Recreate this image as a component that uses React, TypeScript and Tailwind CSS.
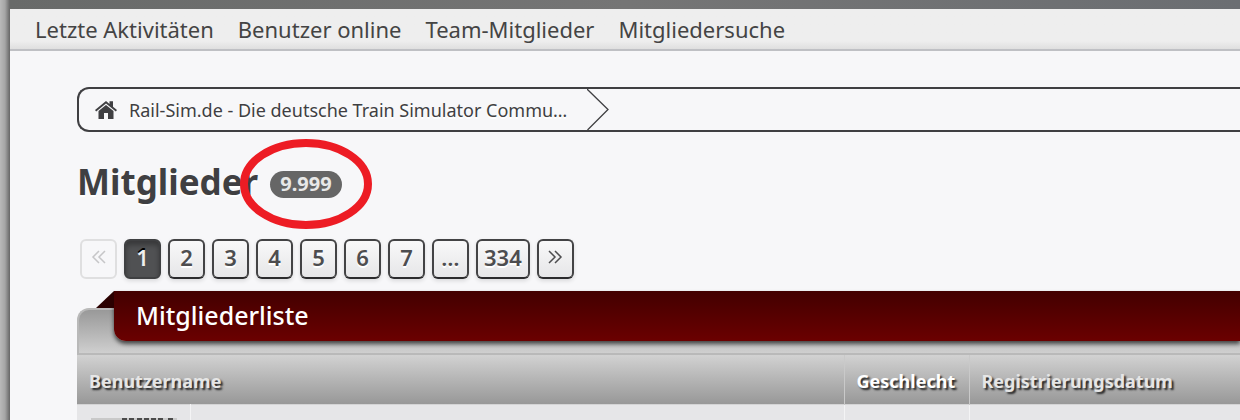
import { ReactNode } from 'react';

const NAV_LINKS = [
  'Letzte Aktivitäten',
  'Benutzer online',
  'Team-Mitglieder',
  'Mitgliedersuche',
];

const PAGES = ['1', '2', '3', '4', '5', '6', '7', '…', '334'];

interface IPageButtonProps {
  label: string;
  active?: boolean;
  disabled?: boolean;
  children: ReactNode;
}

function PageButton({ label, active, disabled, children }: IPageButtonProps) {
  let look =
    'border-[#434345] border-b-[#2b2b2d] bg-linear-to-b from-[#f8f8f9] to-[#e6e6e8] text-[#4d4d4f] shadow-[0_2px_4px_rgba(0,0,0,0.12)] [text-shadow:0_2px_0_#fff]';
  if (active) {
    look =
      'border-[#3f4042] bg-[#505153] text-[#efefef] shadow-[inset_0_4px_5px_rgba(0,0,0,0.3),0_2px_4px_rgba(0,0,0,0.12)] [text-shadow:0_-2px_0_#000]';
  }
  if (disabled) {
    look = 'border-[#dfdfe0] text-[#c6c6c8]';
  }

  return (
    <button
      type="button"
      aria-label={label}
      disabled={disabled}
      className={`flex h-10 min-w-[37px] items-center justify-center rounded-md border-2 px-1.5 pb-1 text-[22px] leading-6 font-semibold ${look}`}
    >
      {children}
    </button>
  );
}

function DoubleChevron({ d }: { d: string }) {
  return (
    <svg
      className="h-4 w-4"
      viewBox="0 0 16 16"
      fill="none"
      stroke="currentColor"
      strokeWidth="1.5"
    >
      <path d={d} />
    </svg>
  );
}

function Breadcrumb() {
  return (
    <nav
      aria-label="Breadcrumb"
      className="flex h-[45px] rounded-l-xl border-2 border-r-0 border-[#3f3f42]"
    >
      <a
        href="#"
        className="flex w-[508px] items-center pl-4 text-[#3f3f42] [text-shadow:0_2px_0_#fff]"
      >
        <svg className="h-5 w-[22px]" viewBox="0 0 22 20" fill="currentColor">
          <path d="M11 5 18.5 11V19H13V13H9V19H3.500V11Z" />
          <path d="M11 1 14.500 3.900V1.200H18V6.800L22 10 20.800 11.400 11 3.500 1.200 11.400 0 10Z" />
        </svg>
        <span className="ml-3 text-[18px] leading-6 whitespace-nowrap">
          Rail-Sim.de - Die deutsche Train Simulator Commu…
        </span>
      </a>
      <svg
        className="h-full w-[22px]"
        viewBox="0 0 22 41"
        fill="none"
        stroke="#3f3f42"
        strokeWidth="1.3"
      >
        <path d="M0 0 21 20.500 0.500 41" />
      </svg>
    </nav>
  );
}

function Title() {
  return (
    <div className="mt-[26px] flex h-12 items-center">
      <h1 className="text-[35px] leading-12 font-bold text-[#3f3f42] [text-shadow:0_2px_0_#fff]">
        Mitglieder
      </h1>
      <span className="relative mt-1 ml-3 flex h-[27px] items-center rounded-full bg-[#666] px-2.5 text-[20px] leading-6 font-bold text-[#e8e8e8]">
        9.999
        <svg
          className="absolute top-1/2 left-1/2 h-[90px] w-[132px] max-w-none -translate-x-1/2 -translate-y-1/2"
          viewBox="0 0 132 90"
          fill="none"
        >
          <ellipse
            cx="66"
            cy="45"
            rx="62"
            ry="41"
            stroke="#ed1c24"
            strokeWidth="8"
          />
        </svg>
      </span>
    </div>
  );
}

function MemberList() {
  const headCell =
    'border-l border-[#c9c9c9] px-3 pt-1 text-left text-[18px] font-bold whitespace-nowrap [text-shadow:2px_2px_2px_#222]';

  return (
    <section className="mt-3">
      <div className="relative">
        <div className="pt-[17px]">
          <div className="h-[47px] rounded-tl-xl border-2 border-r-0 border-[#b9b9b9] bg-linear-to-b from-[#999] to-[#cfcfcf]" />
        </div>
        {/* ribbon with its folded corner, lying over the grey bar */}
        <div className="absolute top-0 right-0 left-[37px] flex h-[50px] items-center rounded-bl-xl bg-linear-to-b from-[#430000] to-[#6b0000] px-[22px] pb-0.5 shadow-[0_3px_4px_rgba(0,0,0,0.65)]">
          <h2 className="text-[25px] leading-8 font-medium text-white">
            Mitgliederliste
          </h2>
        </div>
        <svg
          className="absolute top-0 left-[19px] h-[17px] w-[18px]"
          viewBox="0 0 18 17"
        >
          <path d="M18 0V17H0Z" fill="#2b0000" />
        </svg>
      </div>
      <table className="w-full table-fixed border-collapse">
        <colgroup>
          <col className="w-[113px]" />
          <col />
          <col className="w-[125px]" />
          <col className="w-[271px]" />
        </colgroup>
        <thead>
          <tr className="h-[49px] bg-linear-to-b from-[#d2d2d2] to-[#989898] text-[#e6e6e6]">
            <th
              colSpan={2}
              className="px-3 pt-1 text-left text-[18px] font-bold [text-shadow:2px_2px_2px_#222]"
            >
              Benutzername
            </th>
            <th className={`${headCell} text-white`}>Geschlecht</th>
            <th className={headCell}>Registrierungsdatum</th>
          </tr>
        </thead>
        <tbody>
          <tr className="h-16 border-t border-[#d4d4d5] bg-[#e6e6e8] align-top">
            <td className="px-3.5 pt-[13px]">
              <svg className="h-12 w-[86px]" viewBox="0 0 86 48">
                <path d="M0 0H86V48H0Z" fill="#c9c9c9" />
                <path
                  d="M31 1H43M46 1H72M77 1H83"
                  stroke="#4b4b4b"
                  strokeWidth="2"
                  strokeDasharray="5 2"
                />
              </svg>
            </td>
            <td className="border-l border-[#f4f4f5]" />
            <td className="border-l border-[#f4f4f5]" />
            <td className="border-l border-[#f4f4f5]" />
          </tr>
        </tbody>
      </table>
    </section>
  );
}

function App() {
  return (
    <div className="flex h-screen overflow-hidden bg-[#f7f7f9] font-['Trebuchet_MS','Noto_Sans',sans-serif]">
      <div className="w-2.5 shrink-0 bg-linear-to-r from-[#b9b9b9] via-[#a5a5a5] to-[#666]" />
      <div className="min-w-0 flex-1">
        <div className="h-[9px] bg-linear-to-r from-[#686a69] via-[#757575] to-[#6b6e72]" />
        <nav className="flex h-[42px] items-center gap-6 border-b-2 border-[#bfc0c4] bg-linear-to-b from-[#eee] from-80% to-[#dfdfdf] px-[25px] text-[22px] leading-7 text-[#444]">
          {NAV_LINKS.map((link) => (
            <a key={link} href="#" className="whitespace-nowrap">
              {link}
            </a>
          ))}
        </nav>
        <main className="pt-9 pl-[67px]">
          <Breadcrumb />
          <Title />
          <nav aria-label="Seiten" className="mt-[33px] ml-[3px] flex gap-[7px]">
            <PageButton label="Vorherige Seite" disabled>
              <DoubleChevron d="M8 2 2 8 8 14M14 2 8 8 14 14" />
            </PageButton>
            {PAGES.map((page) => (
              <PageButton key={page} label={page} active={page === '1'}>
                {page}
              </PageButton>
            ))}
            <PageButton label="Nächste Seite">
              <DoubleChevron d="M2 2 8 8 2 14M8 2 14 8 8 14" />
            </PageButton>
          </nav>
          <MemberList />
        </main>
      </div>
    </div>
  );
}

export default App;
